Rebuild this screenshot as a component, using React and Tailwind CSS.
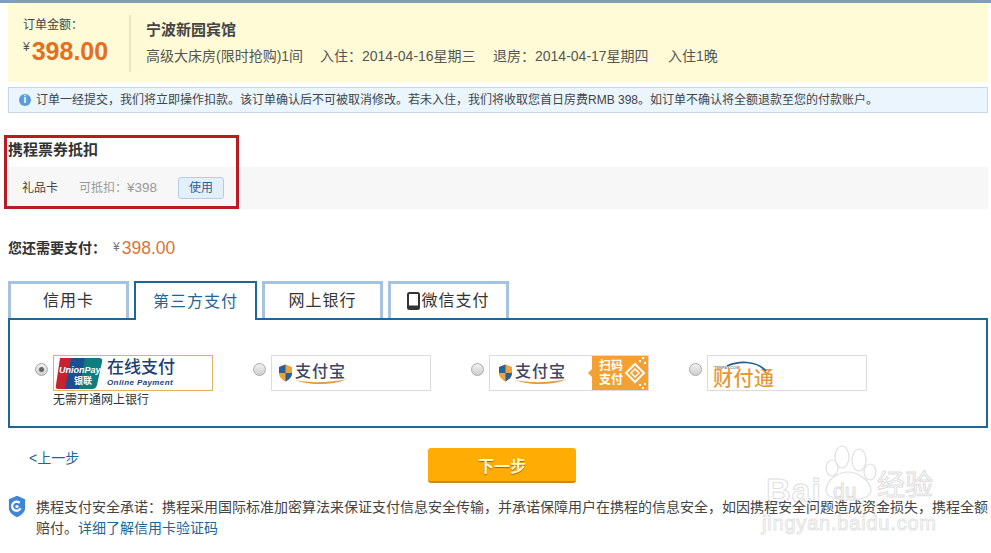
const F = '"Liberation Sans","Noto Sans CJK SC",sans-serif';

function Shield() {
  return (
    <svg width="15" height="18" viewBox="0 0 15 18" className="shrink-0">
      <path d="M7.5 0.5 L14 3 V9 C14 13 11 15.5 7.5 17.5 C4 15.5 1 13 1 9 V3 Z" fill="#e8a33a" />
      <path d="M7.5 0.5 L1 3 V9 H7.5 Z" fill="#2c5f95" />
      <path d="M7.5 9 H14 C14 13 11 15.5 7.5 17.5 Z" fill="#2c5f95" />
    </svg>
  );
}

function AlipayLogo() {
  return (
    <div className="flex items-center gap-[2px] relative">
      <Shield />
      <div className="relative w-[52px] h-[20px]">
        <span className="block text-[16px] leading-[18px] font-medium text-[#3f4560] tracking-[1px] whitespace-nowrap">支付宝</span>
        <svg width="52" height="6" viewBox="0 0 52 6" className="absolute left-0 top-[15px]">
          <path d="M0 2 C14 5 34 5 52 1 C44 5 34 6 24 6 C14 6 5 4 0 2 Z" fill="#e39a3a" />
        </svg>
      </div>
    </div>
  );
}

function Radio({ on }) {
  return (
    <span className="w-[13px] h-[13px] rounded-full border border-[#a9a9a9] bg-gradient-to-b from-[#f0f0f0] to-[#cfcfcf] flex items-center justify-center shrink-0 mt-[8px]">
      {on && <span className="w-[5px] h-[5px] rounded-full bg-[#666]" />}
    </span>
  );
}

function Tab({ active, w, children }) {
  return active ? (
    <div className={`${w} h-[39px] -mb-[2px] relative z-10 bg-white border-2 border-b-0 border-[#1f6595] text-[#1f6595] text-[16px] flex items-center justify-center tracking-[1px]`}>
      {children}
    </div>
  ) : (
    <div className={`${w} h-[37px] bg-white border-[3px] border-b-0 border-[#a6c3dd] text-[#333] text-[16px] flex items-center justify-center tracking-[1px]`}>
      {children}
    </div>
  );
}

function Watermark() {
  const outline = 'text-transparent [-webkit-text-stroke:1px_#dedede]';
  return (
    <div className="absolute left-[755px] top-[445px] w-[190px] h-[95px] pointer-events-none">
      <svg width="70" height="60" viewBox="0 0 70 60" className="absolute left-[60px] top-0">
        <g fill="none" stroke="#e0e0e0" strokeWidth="1.2">
          <ellipse cx="17" cy="23" rx="6" ry="8" />
          <ellipse cx="27" cy="12" rx="7" ry="11" />
          <ellipse cx="44" cy="15" rx="7" ry="11" />
          <ellipse cx="55" cy="27" rx="6" ry="8" />
          <path d="M11 46 C11 34 24 27 33 27 C43 27 56 36 56 46 C56 58 11 58 11 46 Z" />
        </g>
      </svg>
      <span className={`absolute left-[11px] top-[26px] text-[34px] leading-[38px] font-bold tracking-[1px] ${outline}`}>Bai</span>
      <span className={`absolute left-[78px] top-[34px] text-[21px] leading-[24px] ${outline}`}>du</span>
      <span className={`absolute left-[122px] top-[25px] text-[28px] leading-[32px] whitespace-nowrap ${outline}`}>经验</span>
      <span className="absolute left-[7px] top-[66px] text-[20px] leading-[24px] tracking-[0.8px] whitespace-nowrap text-transparent [-webkit-text-stroke:1px_#e4e4e4]">jingyan.baidu.com</span>
    </div>
  );
}

export default function App() {
  return (
    <div className="relative w-[991px] h-[553px] overflow-hidden bg-white text-[#333]" style={{ fontFamily: F }}>
      <Watermark />
      <div className="relative h-[3px] bg-[#7f9fb6]" />
      <div className="relative mx-2 w-[980px]">
        <div className="h-[79px] bg-[#fffbd6] flex pt-[12px] pl-[15px]">
          <div className="w-[106px] h-[57px] shrink-0">
            <div className="text-[12px] leading-[18px] text-[#444] mt-[1px]">订单金额：</div>
            <div className="flex items-start mt-[3px]">
              <span className="text-[12px] leading-[14px] mt-[3px] text-[#555]">¥</span>
              <span className="text-[25px] leading-[28px] font-bold text-[#e56e22] ml-[2px]">398.00</span>
            </div>
          </div>
          <div className="w-[2px] h-[57px] bg-[#ece3bf] shrink-0" />
          <div className="pl-[15px]">
            <div className="text-[15px] leading-[20px] font-bold text-[#444] mt-[5px]">宁波新园宾馆</div>
            <div className="flex text-[14px] leading-[20px] mt-[6px] text-[#555] whitespace-nowrap">
              <span className="w-[174px]">高级大床房(限时抢购)1间</span>
              <span className="w-[173px]">入住：2014-04-16星期三</span>
              <span className="w-[175px]">退房：2014-04-17星期四</span>
              <span>入住1晚</span>
            </div>
          </div>
        </div>
        <div className="mt-[5px] h-[26px] bg-[#eaf5fd] border border-[#c9d9e4] flex items-center pl-[10px] text-[12px] text-[#444]">
          <span className="w-[12px] h-[12px] rounded-full bg-[#5c9bd8] text-white text-[10px] font-bold leading-[12px] text-center shrink-0 mr-[5px]">i</span>
          <span className="whitespace-nowrap">订单一经提交，我们将立即操作扣款。该订单确认后不可被取消修改。若未入住，我们将收取您首日房费RMB 398。如订单不确认将全额退款至您的付款账户。</span>
        </div>

        <div className="mt-[26px] h-[23px] text-[15px] leading-[22px] font-bold text-[#333]">携程票券抵扣</div>
        <div className="mt-[5px] h-[42px] bg-[#f7f7f7] flex items-center pl-[14px] text-[12px]">
          <span className="w-[57px] text-[#444]">礼品卡</span>
          <span className="w-[99px] text-[#999] whitespace-nowrap">可抵扣：<span className="text-[13.5px]">¥398</span></span>
          <span className="w-[46px] h-[22px] rounded-[3px] border border-[#b3cfe3] bg-[#e3f0f9] text-[#1f6595] flex items-center justify-center">使用</span>
        </div>

        <div className="mt-[28px] h-[22px] flex items-center text-[14px]">
          <span className="font-bold text-[#333]">您还需要支付：</span>
          <span className="text-[12px] text-[#777] -mt-[3px] ml-[7px]">¥</span>
          <span className="text-[17.5px] text-[#d9733a] ml-[2px]">398.00</span>
        </div>

        <div className="mt-[20px] flex items-end gap-[5px] h-[39px]">
          <Tab w="w-[121px]">信用卡</Tab>
          <Tab active w="w-[123px]">第三方支付</Tab>
          <Tab w="w-[121px]">网上银行</Tab>
          <Tab w="w-[121px]">
            <svg width="13" height="18" viewBox="0 0 13 18" className="mr-[1px]">
              <rect x="1" y="1" width="11" height="16" rx="1.5" fill="none" stroke="#333" strokeWidth="2" />
              <rect x="1" y="13.5" width="11" height="3.5" fill="#333" />
            </svg>
            微信支付
          </Tab>
        </div>

        <div className="h-[110px] border-2 border-[#1f6595] flex pt-[35px] pl-[25px] items-start">
          <div className="flex gap-[5px] w-[218px]">
            <Radio on />
            <div>
              <div className="w-[160px] h-[36px] border border-[#e0b45c] flex items-center pl-[1px] overflow-hidden">
                <svg width="48" height="31" viewBox="0 0 48 31" className="shrink-0">
                  <path d="M5 0 H18 L12 31 H3 Q0 31 1 27 Z" fill="#c8232c" />
                  <path d="M16 0 H32 L26 31 H10 Z" fill="#1c4f8f" />
                  <path d="M30 0 H44 Q48 0 47 4 L42 27 Q41 31 37 31 H24 Z" fill="#0f7c7e" />
                  <text x="4" y="15" fontSize="9" fontWeight="700" fontStyle="italic" fill="#fff" fontFamily="Liberation Sans">UnionPay</text>
                  <text x="19" y="26" fontSize="9" fontWeight="700" fill="#fff">银联</text>
                </svg>
                <div className="ml-[4px] text-[#1f3f74] leading-none whitespace-nowrap">
                  <div className="text-[17px] leading-[19px] font-medium">在线支付</div>
                  <div className="text-[8px] leading-[10px] mt-[1px] font-bold italic tracking-[0.4px]">Online  Payment</div>
                </div>
              </div>
              <div className="text-[12px] leading-[18px] text-[#333]">无需开通网上银行</div>
            </div>
          </div>
          <div className="flex gap-[5px] w-[218px]">
            <Radio />
            <div className="w-[160px] h-[36px] border border-[#dcdcdc] flex items-center pl-[6px]"><AlipayLogo /></div>
          </div>
          <div className="flex gap-[5px] w-[218px]">
            <Radio />
            <div className="w-[160px] h-[36px] border border-[#dcdcdc] flex items-center pl-[8px] relative">
              <AlipayLogo />
              <div className="ml-auto h-[34px] w-[56px] bg-[#f5a033] flex items-center pl-[7px] relative">
                <span className="absolute -left-[4px] top-[13px] w-0 h-0 border-y-[4px] border-y-transparent border-r-[4px] border-r-[#f5a033]" />
                <span className="text-[12px] leading-[14px] font-bold text-white w-[25px]">扫码支付</span>
                <svg width="22" height="34" viewBox="0 0 22 34">
                  <path d="M11 8 L20 17 L11 26 L2 17 Z" fill="none" stroke="#fff" strokeWidth="2" />
                  <path d="M11 13 L15 17 L11 21 L7 17 Z" fill="none" stroke="#fff" strokeWidth="1.5" />
                  <g fill="#fff">
                    <rect x="18" y="1" width="2" height="2" />
                    <rect x="15" y="4" width="2" height="2" />
                    <rect x="20" y="6" width="2" height="2" />
                    <rect x="20" y="27" width="2" height="2" />
                    <rect x="15" y="28" width="2" height="2" />
                    <rect x="18" y="31" width="2" height="2" />
                  </g>
                </svg>
              </div>
            </div>
          </div>
          <div className="flex gap-[5px]">
            <Radio />
            <div className="w-[160px] h-[36px] border border-[#dcdcdc] flex items-center pl-[5px] relative">
              <svg width="42" height="12" viewBox="0 0 42 12" className="absolute left-[18px] top-[5px]">
                <path d="M1 5 C12 0 30 -1 40 10" fill="none" stroke="#1f5f95" strokeWidth="1.6" />
              </svg>
              <span className="absolute left-[6px] top-[9px] text-[4px] leading-[5px] text-[#888] font-bold">TENPAY.COM</span>
              <span className="text-[20px] leading-[22px] mt-[11px] font-medium text-[#e39a3a] tracking-[0.5px] whitespace-nowrap">财付通</span>
            </div>
          </div>
        </div>

        <div className="flex h-[62px] items-start">
          <a className="ml-[21px] mt-[20px] text-[14px] leading-[20px] text-[#1f6595] w-[399px]">&lt;上一步</a>
          <button className="mt-[20px] w-[148px] h-[35px] pt-[4px] rounded-[3px] bg-[#ffac05] border-b-2 border-[#c98a20] text-[#fff6d0] text-[16px] font-bold" style={{ textShadow: '0 1px 1px #a36a00' }}>下一步</button>
        </div>

        <div className="flex items-start mt-[7px] w-[983px]">
          <svg width="18" height="23" viewBox="0 0 20 24" className="shrink-0 -mt-[2px]">
            <path d="M10 0 L19 4 V14 C19 19 14 22 10 24 C6 22 1 19 1 14 V4 Z" fill="#3f87d6" />
            <path d="M13 8 A5 5 0 1 0 14 14" fill="none" stroke="#fff" strokeWidth="2.5" />
            <circle cx="10" cy="12" r="1.8" fill="#fff" />
          </svg>
          <p className="ml-[10px] text-[14px] leading-[21px] text-[#444]">
            携程支付安全承诺：携程采用国际标准加密算法来保证支付信息安全传输，并承诺保障用户在携程的信息安全，如因携程安全问题造成资金损失，携程全额赔付。<a className="text-[#1f6595]">详细了解信用卡验证码</a>
          </p>
        </div>
      </div>

      <div className="absolute left-[4px] top-[135px] w-[235px] h-[74px] border-[3px] border-[#b81c22] pointer-events-none" />
    </div>
  );
}
